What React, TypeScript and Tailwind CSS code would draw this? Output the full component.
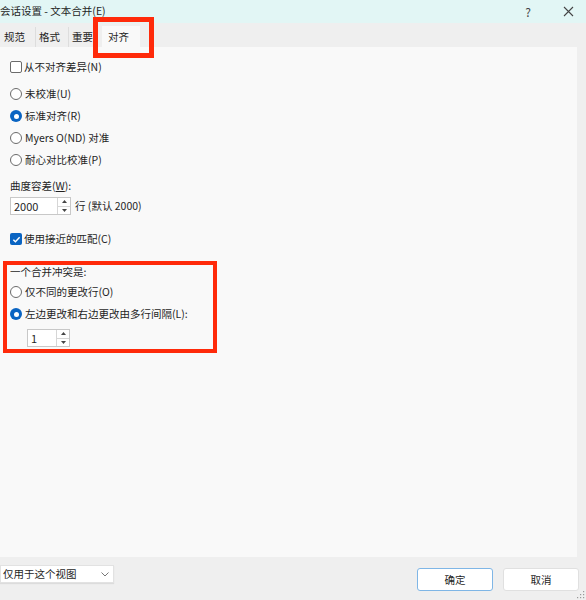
import React from 'react';

function Radio({ checked = false }: { checked?: boolean }) {
  return checked ? (
    <span className="w-[12px] h-[12px] rounded-full bg-[#0a64c2] flex items-center justify-center shrink-0">
      <span className="w-[5px] h-[5px] rounded-full bg-white" />
    </span>
  ) : (
    <span className="w-[12px] h-[12px] rounded-full border border-[#6b6b6b] bg-white shrink-0" />
  );
}

function Checkbox({ checked = false }: { checked?: boolean }) {
  return checked ? (
    <span className="w-[12px] h-[12px] rounded-[2px] bg-[#0a64c2] flex items-center justify-center shrink-0">
      <svg width="9" height="9" viewBox="0 0 10 10" fill="none" stroke="white" strokeWidth={1.6}>
        <path d="M1.5 5.2l2.3 2.3 4.7-5" />
      </svg>
    </span>
  ) : (
    <span className="w-[12px] h-[12px] rounded-[2px] border border-[#6b6b6b] bg-white shrink-0" />
  );
}

function SpinBox({ value, width }: { value: string; width: string }) {
  return (
    <div className={`${width} h-[18px] flex border border-[#c8c8c8] bg-white`}>
      <span className="flex-1 pl-[3px] leading-[16px] text-[11px]">{value}</span>
      <div className="w-[13px] flex flex-col border-l border-[#d6d6d6]">
        <span className="flex-1 flex items-center justify-center border-b border-[#d6d6d6]">
          <svg width="5" height="3" viewBox="0 0 5 3"><path d="M0 3L2.5 0L5 3Z" fill="#444" /></svg>
        </span>
        <span className="flex-1 flex items-center justify-center">
          <svg width="5" height="3" viewBox="0 0 5 3"><path d="M0 0L2.5 3L5 0Z" fill="#444" /></svg>
        </span>
      </div>
    </div>
  );
}

function Option({ label, checked = false }: { label: string; checked?: boolean }) {
  return (
    <div className="h-[22px] flex items-center gap-[3px]">
      <Radio checked={checked} />
      <span>{label}</span>
    </div>
  );
}

export default function App() {
  return (
    <div className="w-[586px] h-[600px] bg-[#efefef] flex flex-col relative overflow-hidden text-[10.5px] text-[#1f1f1f] font-['Noto_Sans_CJK_SC','Noto_Sans',sans-serif]">
      {/* 标题栏 */}
      <div className="h-[23px] bg-[#e2f6f5] flex items-center justify-between shrink-0">
        <span className="leading-none">会话设置 - 文本合并(E)</span>
        <div className="flex items-center">
          <span className="text-[12px] text-[#444] mr-[32px]">?</span>
          <svg width="11" height="11" viewBox="0 0 11 11" stroke="#444" strokeWidth={1.1} className="mr-[12px]">
            <path d="M1 1l9 9M10 1l-9 9" />
          </svg>
        </div>
      </div>

      {/* 标签页 */}
      <div className="h-[24px] flex items-end shrink-0">
        <span className="w-[36px] h-[20px] pl-[4px] leading-[20px] border-r border-[#dddddd]">规范</span>
        <span className="w-[33px] h-[20px] pl-[3px] leading-[20px] border-r border-[#dddddd]">格式</span>
        <span className="w-[33px] h-[20px] pl-[3px] leading-[20px]">重要</span>
        <span className="w-[38px] h-[21px] pl-[6px] leading-[21px] bg-[#f9f9f9]">对齐</span>
      </div>

      {/* 内容面板 */}
      <div className="w-[577px] h-[510px] bg-[#f9f9f9] pl-[10px] pt-[9px] shrink-0">
        <div className="h-[22px] flex items-center gap-[2px]">
          <Checkbox />
          <span>从不对齐差异(N)</span>
        </div>
        <div className="mt-[5px]">
          <Option label="未校准(U)" />
          <Option label="标准对齐(R)" checked />
          <Option label="Myers O(ND) 对准" />
          <Option label="耐心对比校准(P)" />
        </div>
        <div className="mt-[5px] h-[20px] flex items-center">
          曲度容差(<span className="underline">W</span>):
        </div>
        <div className="mt-[1px] flex items-center gap-[4px]">
          <SpinBox value="2000" width="w-[61px]" />
          <span>行 (默认 2000)</span>
        </div>
        <div className="mt-[13px] h-[22px] flex items-center gap-[2px]">
          <Checkbox checked />
          <span>使用接近的匹配(C)</span>
        </div>

        <div className="mt-[11px] -ml-[7px] w-[214px] border-4 border-[#ff2a0a] pl-[3px] pb-[2px]">
          <div className="h-[13px] flex items-center">一个合并冲突是:</div>
          <div className="mt-[3px]">
            <Option label="仅不同的更改行(O)" />
            <Option label="左边更改和右边更改由多行间隔(L):" checked />
          </div>
          <div className="mt-[4px] ml-[17px]">
            <SpinBox value="1" width="w-[43px]" />
          </div>
        </div>
      </div>

      {/* 底部按钮栏 */}
      <div className="flex-1 flex items-start justify-between">
        <div className="mt-[8px] w-[114px] h-[18px] bg-white border border-[#e2e2e2] flex items-center justify-between pl-[2px] pr-[4px] shadow-[0_1px_1px_rgba(0,0,0,0.08)]">
          <span>仅用于这个视图</span>
          <svg width="8" height="5" viewBox="0 0 8 5" fill="none" stroke="#777" strokeWidth={1}>
            <path d="M0.5 0.5L4 4L7.5 0.5" />
          </svg>
        </div>
        <div className="mt-[11px] flex gap-[10px] mr-[7px]">
          <button className="w-[76px] h-[23px] bg-white border border-[#7fb6e6] rounded-[3px] text-[10.5px]">确定</button>
          <button className="w-[76px] h-[23px] bg-white border border-[#e0e0e0] rounded-[3px] text-[10.5px]">取消</button>
        </div>
      </div>

      {/* 调整大小手柄 */}
      <svg width="8" height="8" viewBox="0 0 8 8" className="absolute right-[1px] bottom-[1px]" fill="#999">
        <rect x="6" y="0" width="1.2" height="1.2" />
        <rect x="3" y="3" width="1.2" height="1.2" />
        <rect x="6" y="3" width="1.2" height="1.2" />
        <rect x="0" y="6" width="1.2" height="1.2" />
        <rect x="3" y="6" width="1.2" height="1.2" />
        <rect x="6" y="6" width="1.2" height="1.2" />
      </svg>

      {/* 标注框 */}
      <div className="absolute left-[93px] top-[17px] w-[61px] h-[41px] border-[5px] border-[#ff2a0a]" />
    </div>
  );
}
